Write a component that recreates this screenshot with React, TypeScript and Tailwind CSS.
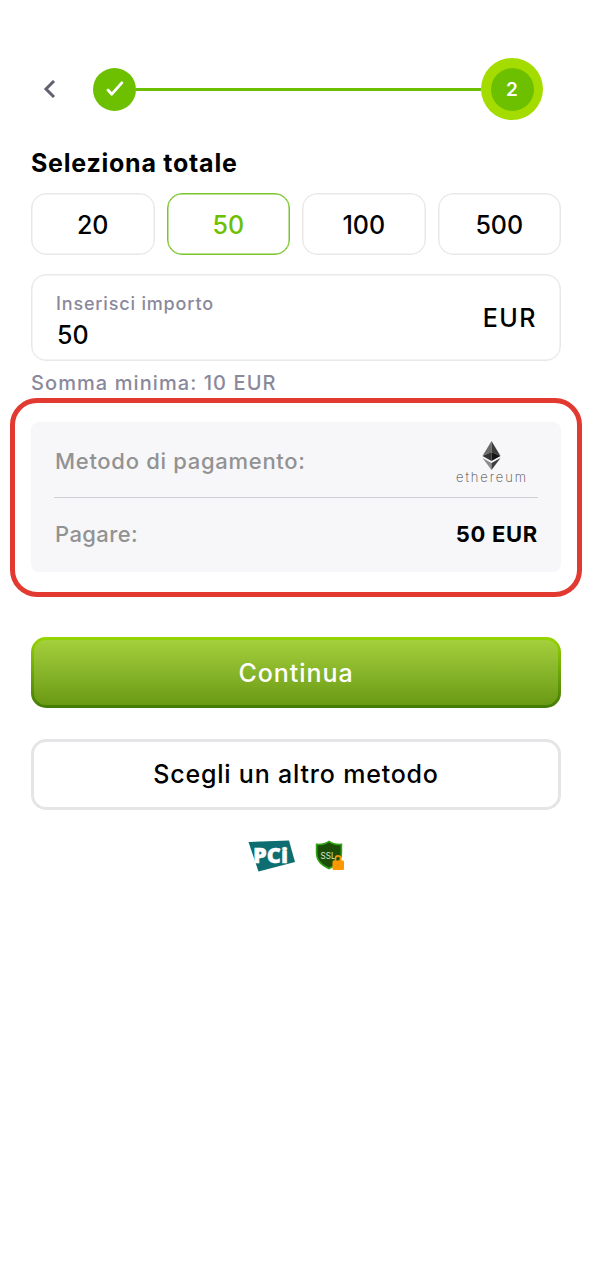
import React from "react";
import clsx from "clsx";

interface AmountProps {
  value: string;
  active?: boolean;
}

const amounts: AmountProps[] = [
  { value: "20" },
  { value: "50", active: true },
  { value: "100" },
  { value: "500" },
];

const EthereumLogo = () => (
  <div className="mr-[1px] flex w-[72px] flex-col items-center pt-[2px]">
    <svg width="19" height="29" viewBox="0 0 19 29">
      <path d="M9.5 0L0.5 15L9.5 11Z" fill="#6b6b6b" />
      <path d="M9.5 0L18.5 15L9.5 11Z" fill="#3c3c3b" />
      <path d="M0.5 15L9.5 11V20Z" fill="#343434" />
      <path d="M18.5 15L9.5 11V20Z" fill="#141414" />
      <path d="M0.5 17L9.5 22V29Z" fill="#8c8c8c" />
      <path d="M18.5 17L9.5 22V29Z" fill="#3c3c3b" />
    </svg>
    <span className="-mt-[1px] pl-[2px] text-[13px] leading-[16px] font-extralight tracking-[1.9px] whitespace-nowrap text-[#444]">
      ethereum
    </span>
  </div>
);

const PciBadge = () => (
  <svg width="47" height="32" viewBox="0 0 47 32">
    <path d="M0.500 2L41 0.500L47 22L10.500 31.500Z" fill="#0d6d70" />
    <text x="5" y="23" fontFamily="Open Sans, sans-serif" fontSize="21" fontWeight="800" textLength="35" lengthAdjust="spacingAndGlyphs" fill="#fff" stroke="#fff" strokeWidth="0.4">
      PCi
    </text>
  </svg>
);

const SslBadge = () => (
  <svg width="30" height="31" viewBox="0 0 30 31">
    <path d="M14 0.500C10 3.500 5 4 0.800 3.500V13C0.800 21 6 26 14 29.500C22 26 27.200 21 27.200 13V3.500C23 4 18 3.500 14 0.500Z" fill="#2fa312" />
    <path d="M14 2.500C10 5 6 5.500 2.500 5.300V13C2.500 20 7 24.500 14 27.600C21 24.500 25.500 20 25.500 13V5.300C22 5.500 18 5 14 2.500Z" fill="#1c4d08" />
    <text x="5.500" y="18.500" fontSize="9" textLength="15" lengthAdjust="spacingAndGlyphs" fill="#d5e5cb">
      SSL
    </text>
    <path d="M20.500 21V18.500A2.600 2.600 0 0 1 25.700 18.500V21" fill="none" stroke="#ff9800" strokeWidth="1.600" />
    <rect x="17.500" y="20.500" width="11.500" height="9.500" rx="1.200" fill="#ff9800" />
    <circle cx="23.200" cy="25" r="0.700" fill="#e58900" />
  </svg>
);

const Stepper = () => (
  <div className="flex h-[62px] items-center pr-[18px] pl-[11px]">
    <button className="w-[51px]" aria-label="Indietro">
      <svg width="14" height="18" viewBox="0 0 14 18" fill="none">
        <path d="M12 1L4 9L12 17" stroke="#62616f" strokeWidth="3" />
      </svg>
    </button>
    <div className="flex size-[43px] items-center justify-center rounded-full bg-[#6cc000]">
      <svg width="18" height="16" viewBox="0 0 18 16" fill="none">
        <path d="M2 9L5.800 13.200L15.800 1.800" stroke="#fff" strokeWidth="2.800" strokeLinecap="round" strokeLinejoin="round" />
      </svg>
    </div>
    <div className="h-[3px] flex-1 bg-[#6cc000]" />
    <div className="flex size-[62px] items-center justify-center rounded-full bg-[#a5dc00]">
      <div className="flex size-[43px] items-center justify-center rounded-full bg-[#6cc000] pt-[3px] text-[19px] font-semibold text-white">2</div>
    </div>
  </div>
);

const AmountButton: React.FC<AmountProps> = ({ value, active }) => (
  <button
    className={clsx(
      "h-[62px] rounded-[15px] border pt-[4px] text-[25px] font-medium inset-ring-[0.5px]",
      active ? "border-[#79c52a] inset-ring-[#79c52a] text-[#6cc000]" : "border-[#e8e8e8] inset-ring-[#e8e8e8] text-black"
    )}
  >
    {value}
  </button>
);

export default function App() {
  return (
    <main className="min-h-[1280px] bg-white px-[31px] pt-[58px] font-['Inter','Liberation_Sans',sans-serif] text-black">
      <Stepper />

      <h1 className="mt-[27px] text-[25px] leading-[32px] font-bold tracking-[0.75px] whitespace-nowrap">Seleziona totale</h1>

      <div className="mt-[14px] grid grid-cols-4 gap-[12px]">
        {amounts.map((amount) => (
          <AmountButton key={amount.value} {...amount} />
        ))}
      </div>

      <div className="mt-[19px] flex h-[87px] items-center justify-between rounded-[15px] border border-[#e8e8e8] px-[24px] inset-ring-[0.5px] inset-ring-[#e8e8e8]">
        <div className="flex flex-col pt-[7px]">
          <label className="text-[18px] leading-[28px] font-medium tracking-[0.83px] text-[#8a899c]">Inserisci importo</label>
          <span className="pl-[1px] text-[25px] leading-[35px] font-medium">50</span>
        </div>
        <span className="-mr-[1px] pt-[2px] text-[25px] font-medium tracking-[1.5px]">EUR</span>
      </div>
      <p className="mt-[8px] text-[20px] leading-[28px] font-medium tracking-[1.08px] text-[#8a899c]">Somma minima: 10 EUR</p>

      <section className="-mx-[21px] mt-[1px] mb-[40px] h-[199px] rounded-[27px] border-[5px] border-[#e23a30] px-[16px] py-[19px]">
        <div className="h-[150px] rounded-[8px] bg-[#f7f7fa] px-[23px]">
          <div className="flex h-[76px] items-center justify-between border-b border-[#d0d0d4] pt-[4px] pr-[10px]">
            <span className="pl-[1px] text-[22px] font-medium tracking-[0.7px] text-[#929292]">Metodo di pagamento:</span>
            <EthereumLogo />
          </div>
          <div className="flex h-[72px] items-center justify-between">
            <span className="pl-[1px] text-[22px] font-medium tracking-[0.4px] text-[#929292]">Pagare:</span>
            <span className="text-[22px] font-bold tracking-[0.7px]">50 EUR</span>
          </div>
        </div>
      </section>

      <button className="flex h-[71px] w-full items-center justify-center rounded-[15px] bg-linear-to-b from-[#96d500] to-[#437b08] p-[3px] text-[25px] font-medium tracking-[0.95px] text-white">
        <span className="flex size-full items-center justify-center rounded-[12px] bg-linear-to-b from-[#a5d03c] to-[#6a9a13] pt-[2px]">Continua</span>
      </button>
      <button className="mt-[31px] flex h-[71px] w-full items-center justify-center rounded-[15px] border-[3px] border-[#e5e5e7] pt-[1px] text-[25px] font-medium tracking-[0.8px]">
        Scegli un altro metodo
      </button>

      <div className="mt-[30px] flex items-start justify-center gap-[20px]">
        <PciBadge />
        <SslBadge />
      </div>
    </main>
  );
}
